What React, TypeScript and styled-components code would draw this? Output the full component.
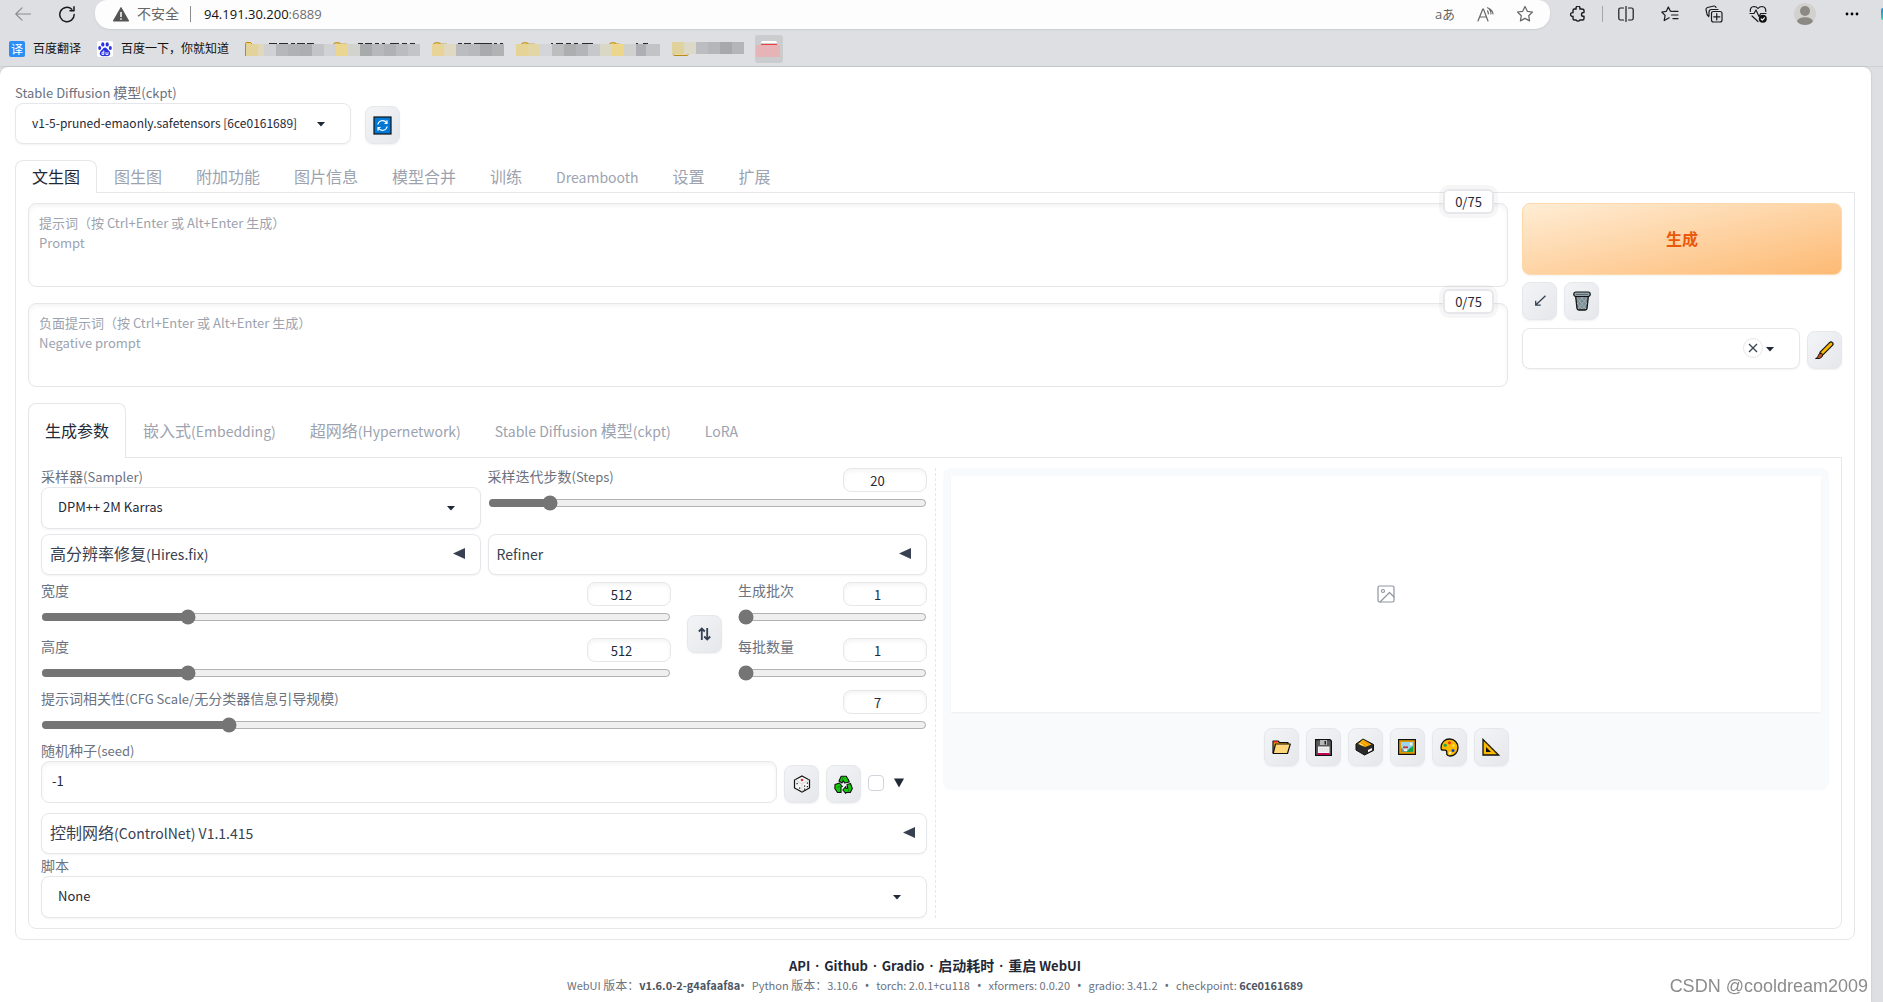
import React, { useState } from "react";
import styled, { createGlobalStyle, css } from "styled-components";

const BORDER = "#e5e7eb";
const UI_FONT = `"Noto Sans CJK SC", "Noto Sans", sans-serif`;
const CHROME_FONT = `"Open Sans", "Noto Sans CJK SC", sans-serif`;

const GlobalStyle = createGlobalStyle`
  *, *::before, *::after { box-sizing: border-box; }
  body { margin: 0; background: #dedfe3; font-family: ${UI_FONT}; font-size: 14px; line-height: 20px; color: #1f2937; }
  button, input, select, textarea { font: inherit; color: inherit; margin: 0; }
  button { cursor: pointer; padding: 0; }
  svg { display: block; flex: none; }
`;

const Window = styled.div`
  display: flex;
  flex-direction: column;
  min-height: 100vh;
`;

/* Latin runs are set one step smaller than the Chinese around them. */
const Latin = styled.span<{ $size: number }>`
  font-size: ${(p) => p.$size}px;
`;

const Mixed = ({ text, latin = 13 }: { text: string; latin?: number }) => (
  <span>
    {text.split(/([\x20-\x7e]+)/).filter(Boolean).map((part, i) =>
      /^[\x20-\x7e]/.test(part) ? <Latin key={i} $size={latin}>{part}</Latin> : part
    )}
  </span>
);

/* ---------- browser bars ---------- */

const AddressRow = styled.div`
  display: flex;
  height: 29px;
  font-family: ${CHROME_FONT};
`;

const NavButtons = styled.div`
  display: flex;
  align-items: center;
  gap: 28px;
  padding: 0 20px 1px 15px;
`;

const IconButton = styled.button<{ $w?: number; $color?: string }>`
  display: flex;
  align-items: center;
  justify-content: center;
  width: ${(p) => p.$w ?? 16}px;
  height: 24px;
  border: 0;
  background: none;
  color: ${(p) => p.$color ?? "#1b1b1b"};
  font-size: 13px;
`;

const AddressPill = styled.div`
  display: flex;
  flex: 1;
  align-items: center;
  min-width: 0;
  padding: 0 5px 1px 18px;
  background: #fdfdfd;
  border-radius: 12px 12px 15px 15px;
  box-shadow: 0 1px 2px rgba(0, 0, 0, 0.08);
`;

const Unsafe = styled.span`
  margin-left: 8px;
  color: #666;
`;

const PillDivider = styled.span`
  width: 1px;
  height: 16px;
  margin: 0 13px 0 11px;
  background: #8a8a8a;
`;

const Address = styled.span`
  flex: 1;
  color: #6f6f6f;
  font-size: 13px;
  b { font-weight: 400; color: #111; }
`;

const Toolbar = styled.div`
  display: flex;
  align-items: center;
  padding: 0 0 1px 5px;
`;

const ToolDivider = styled.span`
  width: 1px;
  height: 16px;
  margin: 0 1px 0 2px;
  background: #a5a6aa;
`;

const Avatar = styled.span`
  width: 22px;
  height: 22px;
  border-radius: 50%;
  overflow: hidden;
`;

const Sliver = styled.span`
  width: 2px;
  height: 12px;
  margin-left: 7px;
  border-radius: 2px 0 0 2px;
  background: linear-gradient(#1b8fd6, #35d0b0);
`;

const Bookmarks = styled.nav`
  display: flex;
  align-items: center;
  height: 38px;
  padding: 2px 0 0 9px;
  border-bottom: 1px solid #d0d1d5;
  font-family: ${CHROME_FONT};
  font-size: 12px;
`;

const Bookmark = styled.a`
  display: flex;
  align-items: center;
  gap: 8px;
  margin-right: 16px;
  color: #111;
  text-decoration: none;
`;

const FolderStrip = styled.div`
  display: flex;
  align-items: center;
`;

/* ---------- page ---------- */

const Page = styled.main`
  flex: 1;
  margin-right: 12px;
  padding: 17px 16px 0 15px;
  background: #fff;
  border-radius: 8px 8px 0 0;
  box-shadow: 0 0 2px rgba(0, 0, 0, 0.2);
`;

const FieldLabel = styled.label`
  display: block;
  height: 19px;
  line-height: 17px;
  color: #6b7280;
`;

const boxed = css`
  border: 1px solid ${BORDER};
  border-radius: 8px;
  background: #fff;
`;

const SelectWrap = styled.div`
  position: relative;
`;

const Select = styled.select<{ $compact?: boolean }>`
  ${boxed}
  display: block;
  width: 100%;
  height: ${(p) => (p.$compact ? 41 : 42)}px;
  padding: 0 38px 2px 16px;
  appearance: none;
  box-shadow: 0 1px 2px rgba(0, 0, 0, 0.05);
  font-size: ${(p) => (p.$compact ? 12 : 13)}px;
`;

const Caret = styled.svg`
  position: absolute;
  right: 26px;
  top: 19px;
  pointer-events: none;
`;

const ClearButton = styled.button`
  position: absolute;
  right: 37px;
  top: 10px;
  display: flex;
  align-items: center;
  justify-content: center;
  width: 20px;
  height: 20px;
  border: 1px solid ${BORDER};
  border-radius: 50%;
  background: #fff;
`;

const ToolButton = styled.button`
  display: flex;
  flex: none;
  align-items: center;
  justify-content: center;
  width: 35px;
  height: 38px;
  border: 1px solid ${BORDER};
  border-radius: 8px;
  background: linear-gradient(to bottom right, #f3f4f6, #e5e7eb);
  box-shadow: 0 1px 2px rgba(0, 0, 0, 0.06);
`;

const Quick = styled.div`
  display: flex;
  align-items: flex-end;
  gap: 14px;
  margin-bottom: 16px;
`;

const QuickField = styled.div`
  width: 336px;
`;

const TabList = styled.div`
  display: flex;
`;

const Tab = styled.button<{ $active?: boolean; $tall?: boolean }>`
  position: relative;
  height: ${(p) => (p.$tall ? 55 : 33)}px;
  margin-bottom: -1px;
  padding: 0 16px 2px;
  border: 1px solid ${(p) => (p.$active ? BORDER : "transparent")};
  border-bottom: 0;
  border-radius: 8px 8px 0 0;
  background: ${(p) => (p.$active ? "#fff" : "transparent")};
  color: ${(p) => (p.$active ? "#1f2937" : "#9ca3af")};
  font-size: 16px;
`;

const Panel = styled.section`
  padding: 10px 12px;
  border: 1px solid ${BORDER};
  border-radius: 0 0 8px 8px;
`;

const TopRow = styled.div`
  display: grid;
  grid-template-columns: minmax(0, 1fr) 320px;
  gap: 14px;
  margin-bottom: 16px;
`;

const Prompts = styled.div`
  display: grid;
  gap: 16px;
`;

const PromptWrap = styled.div`
  position: relative;
`;

const PromptBox = styled.textarea`
  ${boxed}
  display: block;
  width: 100%;
  height: 84px;
  padding: 9px 10px;
  resize: none;
  box-shadow: inset 0 2px 4px rgba(0, 0, 0, 0.05);
  font-size: 13px;
  &::placeholder { color: #9ca3af; opacity: 1; }
`;

const Counter = styled.span`
  position: absolute;
  top: -14px;
  right: 14px;
  width: 51px;
  height: 25px;
  border: 2px solid ${BORDER};
  border-radius: 6px;
  background: #fff;
  box-shadow: 0 0 0 4px rgba(0, 0, 0, 0.035);
  font-size: 13px;
  line-height: 21px;
  text-align: center;
`;

const Actions = styled.div`
  display: flex;
  flex-direction: column;
`;

const Generate = styled.button`
  height: 72px;
  margin-bottom: 7px;
  padding-bottom: 2px;
  border: 1px solid #fed7aa;
  border-radius: 8px;
  background: linear-gradient(to bottom right, #ffedd5, #fdba74);
  box-shadow: 0 1px 2px rgba(0, 0, 0, 0.05);
  color: #ea580c;
  font-size: 16px;
  font-weight: 600;
`;

const ButtonRow = styled.div`
  display: flex;
  gap: 7px;
  margin-bottom: 8px;
`;

const StyleRow = styled.div`
  display: flex;
  align-items: flex-end;
  gap: 7px;
`;

const Grow = styled.div`
  flex: 1;
  min-width: 0;
`;

const Split = styled.div`
  display: grid;
  grid-template-columns: repeat(2, minmax(0, 1fr));
`;

const Params = styled.div`
  padding-right: 8px;
`;

const Output = styled.div`
  padding-left: 7px;
  border-left: 1px dashed ${BORDER};
`;

const TwoCols = styled.div`
  display: grid;
  grid-template-columns: repeat(2, minmax(0, 1fr));
  gap: 5px 7px;
  margin-bottom: 7px;
`;

const SizeRow = styled.div`
  display: grid;
  grid-template-columns: minmax(0, 10fr) 35px minmax(0, 3fr);
  align-items: center;
  gap: 16px;
  margin-bottom: 9px;
  > ${ToolButton} { margin-top: 5px; }
`;

const Stack = styled.div`
  display: grid;
  gap: 13px;
`;

const SliderHead = styled.div`
  display: flex;
  align-items: flex-start;
  justify-content: space-between;
  margin-bottom: 3px;
`;

const NumberBox = styled.input`
  ${boxed}
  width: 84px;
  height: 24px;
  padding: 0 8px;
  text-align: center;
  box-shadow: inset 0 2px 4px rgba(0, 0, 0, 0.05);
  font-size: 13px;
`;

const Range = styled.input`
  display: block;
  width: 100%;
  height: 16px;
  accent-color: #757575;
`;

const Accordion = styled.button<{ $wide?: boolean }>`
  ${boxed}
  display: flex;
  align-items: center;
  justify-content: space-between;
  width: 100%;
  height: 41px;
  padding: 0 ${(p) => (p.$wide ? 11 : 15)}px 2px 8px;
  box-shadow: 0 1px 2px rgba(0, 0, 0, 0.05);
  color: #374151;
  font-size: 16px;
`;

const SeedRow = styled.div`
  display: flex;
  align-items: flex-end;
  gap: 7px;
  margin: 9px 0 10px;
`;

const SeedInput = styled.input`
  ${boxed}
  display: block;
  width: 100%;
  height: 42px;
  padding: 0 10px 4px;
  box-shadow: inset 0 2px 4px rgba(0, 0, 0, 0.05);
  font-size: 13px;
`;

const ExtraToggle = styled.label`
  display: flex;
  align-items: center;
  gap: 10px;
  width: 59px;
  height: 40px;
`;

const Check = styled.input`
  width: 16px;
  height: 16px;
  appearance: none;
  border: 1px solid #d1d5db;
  border-radius: 4px;
  background: #fff;
`;

const ScriptField = styled.div`
  margin-top: 3px;
`;

const Gallery = styled.div`
  padding: 8px 8px 24px;
  border-radius: 8px;
  background: #f9fafb;
`;

const Canvas = styled.div`
  display: flex;
  align-items: center;
  justify-content: center;
  height: 236px;
  margin-bottom: 16px;
  background: #fff;
  box-shadow: 0 1px 2px rgba(0, 0, 0, 0.05);
  color: #9095a0;
`;

const GalleryTools = styled.div`
  display: flex;
  justify-content: center;
  gap: 7px;
`;

const Footer = styled.footer`
  padding-top: 15px;
  text-align: center;
`;

const Links = styled.div`
  font-weight: 600;
  a { color: inherit; text-decoration: none; }
`;

const Dot = styled.span<{ $gap: string }>`
  margin: ${(p) => p.$gap};
  font-family: "Noto Sans", sans-serif;
  line-height: 1;
`;

const Versions = styled.div`
  color: #6b7280;
  font-size: 12px;
  line-height: 18px;
  b { font-weight: 600; color: #4b5563; }
`;

const Watermark = styled.div`
  position: fixed;
  right: 15px;
  bottom: 3px;
  color: #8c8c8c;
  font-family: "Liberation Sans", Arial, sans-serif;
  font-size: 18px;
  line-height: 26px;
  text-shadow: 1px 1px 0 #fff;
`;

/* ---------- icons ---------- */

const line = { fill: "none", stroke: "currentColor", strokeWidth: 1.2, strokeLinecap: "round" as const, strokeLinejoin: "round" as const };

const CaretIcon = () => (
  <Caret width="8" height="5" viewBox="0 0 8 5"><path d="M0 0h8L4 4.6z" fill="#1f2937" /></Caret>
);
const LeftTriangle = () => (
  <svg width="12" height="12" viewBox="0 0 12 12"><path d="M0 5.5 12 0v11z" fill="#374151" /></svg>
);
const Star = ({ lines = false }: { lines?: boolean }) => (
  <svg width="18" height="18" viewBox="0 0 18 18" {...line}>
    {lines ? (
      <path d="M11 6.400 9.300 6.100 7.300 2 5.300 6.300.8 7l3.300 3.400-.9 5.200 5-2.800M12 6.300h5M10.500 10H17M12 13.700h5" />
    ) : (
      <path d="m9 1.500 2.300 4.800 5.200.7-3.800 3.700.9 5.200L9 13.400l-4.600 2.500.9-5.200L1.500 7l5.200-.7z" />
    )}
  </svg>
);

const emoji = {
  refresh: (
    <svg width="19" height="19" viewBox="0 0 19 19">
      <rect x="1" y="1" width="17" height="17" fill="#0078d7" stroke="#111" strokeWidth="1.2" />
      <path d="M4.800 8.500a4.800 4.800 0 0 1 8.700-1.700M14.200 10.500a4.800 4.800 0 0 1-8.700 1.700M14 4.300v3.200h-2.500M5 14.700v-3.200h2.500" fill="none" stroke="#fff" strokeWidth="1.200" />
    </svg>
  ),
  arrow: (
    <svg width="12" height="12" viewBox="0 0 12 12" fill="none" stroke="#374151" strokeWidth="1.3"><path d="M11.500.8 2 9.800M1.700 5.800v4.400h5" /></svg>
  ),
  bin: (
    <svg width="18" height="20" viewBox="0 0 18 20">
      <path d="M2.500 4 4 17.500q.2 1.500 1.800 1.500h6.400q1.600 0 1.800-1.500L15.500 4z" fill="#7d8d94" stroke="#111" strokeWidth="1.3" />
      <path d="m4 7 9 11M4 12l5 6M7 5l7 8M14 7 5 18M14 12l-5 6M11 5l-7 8" stroke="#a9b8be" strokeWidth=".7" />
      <rect x=".8" y="1" width="16.400" height="4.500" rx="2" fill="#93a5ab" stroke="#111" strokeWidth="1.2" />
      <path d="M3 3.500h12" stroke="#5c6a70" />
    </svg>
  ),
  brush: (
    <svg width="19" height="19" viewBox="0 0 19 19" strokeLinecap="round">
      <path d="M7 12 16 3" stroke="#111" strokeWidth="5.2" /><path d="M7 12 16 3" stroke="#fdb900" strokeWidth="2.8" />
      <path d="M1 17.500q2-.6 2.300-3 .6-2.600 3.200-2.400 2 1.200.6 3.700Q5 18.500 1 17.500z" fill="#c8501e" stroke="#111" />
    </svg>
  ),
  die: (
    <svg width="18" height="18" viewBox="0 0 18 18">
      <path d="m9 1 7.500 4v8L9 17l-7.500-4V5z" fill="#f6f6f6" stroke="#111" strokeWidth="1.2" />
      <path d="m2 5 7 4 7-4M9 9v7.500" fill="none" stroke="#d4d4d4" />
      <circle cx="9" cy="5" r="1.300" fill="#d13438" />
      <path d="M3.500 8h1.300v1.300H3.500zM6 12.500h1.300v1.300H6zM11 10.500h1.200v1.200H11zM13.800 7.500H15v1.200h-1.200zM11 13.500h1.200v1.200H11zM13.800 11H15v1.200h-1.200z" fill="#222" />
    </svg>
  ),
  recycle: (
    <svg width="19" height="19" viewBox="0 0 19 19" fill="#16c60c" stroke="#111" strokeWidth="1.100" strokeLinejoin="round">
      <path d="M5 6 7.200 1.200h5L14.500 5l.8 2-4.800 1-1.200-2.500L8 8z" />
      <path d="M1 9.500 5.500 8l2.800 3.500-1.300.5v5.500H3.500L.8 13.500z" />
      <path d="m13 9.500 3.500-1 1.800 5-2 4h-4.500v1L8.800 15l3-3.500v1.800h2z" />
      <path d="m9.700 1.500-2 4M3 12.500l3-1M15 13.500l-1 3.500" stroke="#0b7d06" strokeWidth=".8" />
    </svg>
  ),
  folder: (
    <svg width="19" height="16" viewBox="0 0 19 16" strokeLinejoin="round">
      <path d="M1 14V2h5l1.500 1.500H16V6" fill="#f7a800" stroke="#111" strokeWidth="1.2" />
      <path d="M1.500 2h4v1.500h-4z" fill="#e81224" />
      <path d="M3.500 5h14.800L15.500 14.500H1.200z" fill="#ffd679" stroke="#111" strokeWidth="1.2" />
    </svg>
  ),
  floppy: (
    <svg width="17" height="17" viewBox="0 0 17 17">
      <path d="M.6.6H15L16.400 2v14.400H.6z" fill="#5a5a5a" stroke="#111" strokeWidth="1.2" />
      <path d="M5 1h7v5H5z" fill="#b8b8b8" /><path d="M9.500 2H11v3.500H9.500z" fill="#222" />
      <path d="M3 7.500h11.500v7H3z" fill="#f3f3f3" /><path d="M3 14h11.500v2H3z" fill="#c30052" /><path d="M4 10h9.500M4 12h9.500" stroke="#ccc" strokeWidth=".6" />
    </svg>
  ),
  cardbox: (
    <svg width="20" height="18" viewBox="0 0 20 18" strokeLinejoin="round">
      <path d="m1 6 7-5 10.500 5.500v6L9.500 17 1 12z" fill="#2b2b2b" stroke="#111" />
      <path d="M3 6 8 1.500 16.500 6.500 10 9z" fill="#fdb900" /><path d="m6 5 5 2.500M8 3l6 3.500" stroke="#f7630c" strokeWidth=".7" /><path d="M4.500 5.500 8 7.500" stroke="#fff0b0" />
      <path d="m13 12 4-2v2.300l-4 2z" fill="#fff" />
    </svg>
  ),
  picture: (
    <svg width="18" height="16" viewBox="0 0 18 16">
      <rect x=".6" y=".6" width="16.800" height="14.800" fill="#e09b00" stroke="#111" strokeWidth="1.2" />
      <path d="M3 3h12v10H3z" fill="#9bd3f2" /><circle cx="13" cy="5" r="1.300" fill="#fff8c0" />
      <path d="m8 13 4-4 3-2v6z" fill="#16a34a" /><path d="M3 9l3 1 2 3H3z" fill="#7a8b95" />
      <path d="M5 7.500 6 6.500l1.500 1L9 6.500l.8 1V11q-2.200 2-4.800 0z" fill="#c0c0c0" /><path d="M5 7.500h5V9H5z" fill="#c8302e" /><path d="M6 10.500h3V12H6z" fill="#fff" />
    </svg>
  ),
  palette: (
    <svg width="19" height="19" viewBox="0 0 19 19">
      <path d="M9.500 1C14.500 1 18 4.800 18 9.500S14.500 18 10.500 18q-4 .2-3.800-3 .4-2.800-1.700-2.800H2.300Q.9 11.500 1 9.200C1.500 4.200 5 1 9.500 1z" fill="#fdb900" stroke="#111" strokeWidth="1.3" />
      <circle cx="9.500" cy="4.800" r="1.600" fill="#f03a17" /><circle cx="5.200" cy="7.200" r="1.500" fill="#16a34a" /><circle cx="13" cy="12.500" r="1.500" fill="#0044d6" />
      <circle cx="13.500" cy="7.500" r="1.300" fill="#ffe04a" /><circle cx="10" cy="15" r="1.300" fill="#fff3c4" />
    </svg>
  ),
  triangle: (
    <svg width="18" height="18" viewBox="0 0 18 18"><path d="M1 1.500 16.500 17H1z" fill="#fdb900" stroke="#111" strokeWidth="1.3" /><path d="M4 9v5h5z" fill="#111" /><path d="m3 3.500 12 12" stroke="#b57f00" strokeWidth=".8" strokeDasharray="1 1" /></svg>
  ),
  swap: (
    <svg width="13" height="14" viewBox="0 0 13 14" fill="none" stroke="#374151" strokeWidth="1.8"><path d="M3.800 13V1.500M.8 4.500l3-3 3 3M9.200 1v11.500M6.200 9.500l3 3 3-3" /></svg>
  ),
};

/* Bookmark labels are hidden by a mosaic; each cell is [x, width, colour]. */
type Cell = [number, number, string];
const folders: { id: string; width: number; cells: Cell[]; tips: [number, number][]; top?: number; gold: string }[] = [
  { id: "1", width: 87, gold: "M.5 14V1.500q0-1 1-1h4l2 2h8V4M.5 14h5", tips: [[24, 8], [34, 9], [46, 4], [52, 8], [62, 7]],
    cells: [[1, 12, "#e3d39b"], [13, 6, "#e0d8bb"], [19, 12, "#d0d1d4"], [31, 12, "#b6b7ba"], [43, 12, "#b0b1b4"], [55, 12, "#adaeb1"], [67, 12, "#c3c4c7"], [79, 8, "#d1d2d4"]] },
  { id: "2", width: 100, gold: "M1 2.500Q2 .5 4 .8h3l2 1.400h6", tips: [[26, 5], [33, 7], [43, 4], [50, 3], [58, 9], [70, 5], [78, 5]],
    cells: [[0, 4, "#d0d1d3"], [4, 12, "#ead690"], [16, 12, "#d2d2ce"], [28, 12, "#a9aaac"], [40, 12, "#b7b8bb"], [52, 12, "#b0b1b4"], [64, 12, "#bbbcbf"], [76, 12, "#c3c4c8"]] },
  { id: "3", width: 84, gold: "M1 2.500Q2 .5 4 .8h3l2 1.400h6", tips: [[26, 4], [32, 7], [42, 18], [62, 3], [68, 3]],
    cells: [[0, 12, "#e7d496"], [12, 12, "#dfd9c1"], [24, 12, "#bbbcc0"], [36, 12, "#b8b9bb"], [48, 12, "#a9aaad"], [60, 12, "#b1b2b4"]] },
  { id: "4", width: 86, gold: "M5 2.500Q6 .5 8 .8h3l2 1.400h6", tips: [[35, 2], [40, 7], [50, 5], [58, 4], [66, 11]],
    cells: [[0, 12, "#e5d496"], [12, 12, "#e2d6a5"], [24, 12, "#d4d5d8"], [36, 12, "#bcbdbf"], [48, 12, "#adaeb0"], [60, 12, "#b4b5b9"], [72, 12, "#c7c8cc"], [84, 2, "#dbd7c5"]] },
  { id: "5", width: 70, gold: "M7 2.500Q8 .5 10 .8h3l2 1.400h3", tips: [[34, 2], [41, 5]],
    cells: [[0, 10, "#dbd7c5"], [10, 12, "#ecd68c"], [22, 12, "#d0d1cf"], [34, 10, "#aeafb5"], [44, 14, "#c2c3c7"]] },
  { id: "6", width: 83, top: 0, gold: "M1 12.500q.4 1 2 1h12l1.500-1", tips: [],
    cells: [[0, 12, "#e0d29b"], [12, 12, "#dcd9c9"], [24, 12, "#bcbdc1"], [36, 12, "#b5b6b8"], [48, 12, "#a7a8aa"], [60, 12, "#b4b5b7"]] },
];

const FolderIcon = ({ f }: { f: (typeof folders)[number] }) => (
  <svg width={f.width} height="14" viewBox={`0 0 ${f.width} 14`}>
    <path d={f.gold} fill="#f0cf6b" stroke="#b98a17" />
    {f.tips.map(([x, w]) => <rect key={x} x={x} y="1" width={w} height="1" fill="#2a2a2a" />)}
    {f.cells.map(([x, w, c]) => <rect key={x} x={x} y={f.top ?? 2} width={w} height="12" fill={c} />)}
  </svg>
);

/* ---------- widgets ---------- */

const Dropdown = ({ id, value, clear, compact }: { id: string; value: string; clear?: boolean; compact?: boolean }) => (
  <SelectWrap>
    <Select id={id} aria-label={id} $compact={compact}><option>{value}</option></Select>
    {clear && (
      <ClearButton aria-label="clear">
        <svg width="10" height="10" viewBox="0 0 10 10" stroke="#374151" strokeWidth="1.3"><path d="m1 1 8 8M9 1 1 9" /></svg>
      </ClearButton>
    )}
    <CaretIcon />
  </SelectWrap>
);

const Slider = ({ id, label, value, min, max }: { id: string; label: string; value: number; min: number; max: number }) => {
  const [current, setCurrent] = useState(value);
  const update = (e: React.ChangeEvent<HTMLInputElement>) => setCurrent(Number(e.target.value));
  return (
    <div>
      <SliderHead>
        <FieldLabel htmlFor={id}><Mixed text={label} /></FieldLabel>
        <NumberBox id={id} type="number" value={current} onChange={update} />
      </SliderHead>
      <Range type="range" aria-label={label} min={min} max={max} value={current} onChange={update} />
    </div>
  );
};

const mainTabs = ["文生图", "图生图", "附加功能", "图片信息", "模型合并", "训练", "Dreambooth", "设置", "扩展"];
const subTabs = ["生成参数", "嵌入式(Embedding)", "超网络(Hypernetwork)", "Stable Diffusion 模型(ckpt)", "LoRA"];
const links = ["API", "Github", "Gradio", "启动耗时", "重启 WebUI"];
const versions: [string, string, boolean?][] = [
  ["WebUI 版本：", "v1.6.0-2-g4afaaf8a", true],
  ["Python 版本：", "3.10.6"],
  ["torch: ", "2.0.1+cu118"],
  ["xformers: ", "0.0.20"],
  ["gradio: ", "3.41.2"],
  ["checkpoint: ", "6ce0161689", true],
];

const BrowserBars = () => (
  <header>
    <AddressRow>
      <NavButtons>
        <IconButton aria-label="back" $color="#8b8c90"><svg width="16" height="14" viewBox="0 0 16 14" {...line}><path d="M15.500 7H1M7 .8.8 7 7 13.200" /></svg></IconButton>
        <IconButton aria-label="reload"><svg width="16" height="17" viewBox="0 0 16 17" {...line} strokeWidth={1.5}><path d="M15.200 8.500a7.200 7.200 0 1 1-2.400-5.300M15 .8v4h-4" /></svg></IconButton>
      </NavButtons>
      <AddressPill>
        <svg width="16" height="15" viewBox="0 0 16 15"><path d="M8 .5 15.700 14H.3z" fill="#555" stroke="#555" strokeLinejoin="round" /><path d="M8 5v5M8 11.200v1.500" stroke="#fff" strokeWidth="1.5" /></svg>
        <Unsafe>不安全</Unsafe>
        <PillDivider />
        <Address><b>94.191.30.200</b>:6889</Address>
        <IconButton $w={40} $color="#666" aria-label="translate">aあ</IconButton>
        <IconButton $w={40} $color="#666" aria-label="read aloud">
          <svg width="17" height="15" viewBox="0 0 17 15" {...line}><path d="M1 14 5.800 2h.6L11 14M2.700 10h6.700M10.500 4q1 1.200.8 2.800M12.300 2q2 2.200 1.600 5M10.500.8q5 2 5.500 6" /></svg>
        </IconButton>
        <IconButton $w={40} $color="#666" aria-label="favourite"><Star /></IconButton>
      </AddressPill>
      <Toolbar>
        <IconButton $w={45} aria-label="extensions">
          <svg width="16" height="17" viewBox="0 0 16 17" {...line} strokeWidth={1.4}><path d="M3 4.500q0-1.500 1.500-1.500h1.700a2 2 0 1 1 3.600 0h1.700Q14 3 14 4.500V6.500h-.6a1.900 1.900 0 1 0 0 3.800h.6v2.200q0 1.500-1.500 1.500H9.800a2 2 0 0 1-3.600 0H4.500Q3 14 3 12.500v-2.200a1.900 1.900 0 1 1 0-3.600z" /></svg>
        </IconButton>
        <ToolDivider />
        <IconButton $w={44} aria-label="split screen">
          <svg width="16" height="16" viewBox="0 0 16 16" {...line}><path d="M5.500 2H2.500Q.8 2 .8 3.800v8.400Q.8 14 2.500 14h3M10.500 2h3q1.700 0 1.700 1.800v8.400q0 1.800-1.700 1.800h-3M8 .5v15" /></svg>
        </IconButton>
        <IconButton $w={44} aria-label="favourites"><Star lines /></IconButton>
        <IconButton $w={44} aria-label="collections">
          <svg width="18" height="18" viewBox="0 0 18 18" {...line}><path d="M3.800 11.500 2.300 10Q1 5 1 4.200 1 3 2.500 2.500L9 1q1.500-.2 2 1.500M4 10.500V7q0-2.500 2.500-2.500H13M8.500 6.500H15q2 0 2 2V15q0 2-2 2H8.500q-2 0-2-2V8.500q0-2 2-2zM11.750 8.700v6.200M8.700 11.800h6.200" /></svg>
        </IconButton>
        <IconButton $w={44} aria-label="performance">
          <svg width="18" height="18" viewBox="0 0 18 18" {...line}><path d="M1.300 6.500Q1 1.800 5 1.500q2.500 0 4 2 1.500-2 4-2 4 .3 3.800 5M1 8.500h4l2-3.500 3 6.500 1.700-3H17M3 11l6 5.500" /><circle cx="13.800" cy="13.800" r="4" fill="#111" stroke="none" /><path d="m12.200 14 1.200 1.100 2-2.300" stroke="#fff" /></svg>
        </IconButton>
        <IconButton $w={50} aria-label="profile">
          <Avatar><svg width="22" height="22" viewBox="0 0 22 22"><path d="M0 0h22v22H0z" fill="#d3d1cd" /><circle cx="11" cy="8" r="5" fill="#8c8984" /><ellipse cx="11" cy="19" rx="8" ry="4.800" fill="#8c8984" /></svg></Avatar>
        </IconButton>
        <IconButton $w={44} aria-label="more"><svg width="14" height="4" viewBox="0 0 14 4"><circle cx="2" cy="2" r="1.400" /><circle cx="7" cy="2" r="1.400" /><circle cx="12" cy="2" r="1.400" /></svg></IconButton>
        <Sliver />
      </Toolbar>
    </AddressRow>
    <Bookmarks>
      <Bookmark href="#fanyi">
        <svg width="16" height="16" viewBox="0 0 16 16"><rect width="16" height="16" rx="2" fill="#2b8df5" /><text x="8" y="12.500" fontSize="12" fill="#fff" textAnchor="middle">译</text></svg>
        百度翻译
      </Bookmark>
      <Bookmark href="#baidu">
        <svg width="16" height="16" viewBox="0 0 16 16"><rect width="16" height="16" rx="2" fill="#fff" /><g fill="#2932e1"><ellipse cx="5.800" cy="3.400" rx="1.600" ry="2.200" /><ellipse cx="10.200" cy="3.400" rx="1.600" ry="2.200" /><ellipse cx="2.700" cy="7" rx="1.500" ry="2" /><ellipse cx="13.300" cy="7" rx="1.500" ry="2" /><path d="M8 6.500q1.500 0 2.500 1.700l2.300 2.500q1.200 2.300-.5 3.800-1.300 1-4.300.6-3 .4-4.300-.6-1.700-1.500-.5-3.800l2.300-2.500Q6.500 6.500 8 6.500z" /></g><path d="M6.800 9.500v4H5v-2.200h1.800M9 11v2.500h2V11" fill="none" stroke="#fff" strokeWidth=".9" /></svg>
        百度一下，你就知道
      </Bookmark>
      <FolderStrip>
        {folders.map((f) => <FolderIcon key={f.id} f={f} />)}
        <svg width="28" height="28" viewBox="0 0 28 28"><rect width="28" height="28" rx="3" fill="#cbccce" /><path d="M6 8q0-2 2-2h12q2 0 2 2z" fill="#fff" /><path d="M6 9h16v1H6z" fill="#f03c3c" /><path d="M1 10h24v12H1z" fill="#e6b4b7" /></svg>
      </FolderStrip>
    </Bookmarks>
  </header>
);

export default function App() {
  return (
    <Window>
      <GlobalStyle />
      <BrowserBars />
      <Page>
        <Quick>
          <QuickField>
            <FieldLabel htmlFor="checkpoint"><Mixed text="Stable Diffusion 模型(ckpt)" /></FieldLabel>
            <Dropdown id="checkpoint" compact value="v1-5-pruned-emaonly.safetensors [6ce0161689]" />
          </QuickField>
          <ToolButton aria-label="refresh">{emoji.refresh}</ToolButton>
        </Quick>

        <TabList role="tablist">
          {mainTabs.map((t, i) => <Tab key={t} role="tab" $active={i === 0}><Mixed text={t} latin={14} /></Tab>)}
        </TabList>
        <Panel>
          <TopRow>
            <Prompts>
              <PromptWrap>
                <PromptBox aria-label="Prompt" placeholder={"提示词（按 Ctrl+Enter 或 Alt+Enter 生成）\nPrompt"} />
                <Counter>0/75</Counter>
              </PromptWrap>
              <PromptWrap>
                <PromptBox aria-label="Negative prompt" placeholder={"负面提示词（按 Ctrl+Enter 或 Alt+Enter 生成）\nNegative prompt"} />
                <Counter>0/75</Counter>
              </PromptWrap>
            </Prompts>
            <Actions>
              <Generate>生成</Generate>
              <ButtonRow>
                <ToolButton aria-label="read parameters">{emoji.arrow}</ToolButton>
                <ToolButton aria-label="clear prompt">{emoji.bin}</ToolButton>
              </ButtonRow>
              <StyleRow>
                <Grow><Dropdown id="styles" compact value="" clear /></Grow>
                <ToolButton aria-label="edit styles">{emoji.brush}</ToolButton>
              </StyleRow>
            </Actions>
          </TopRow>

          <TabList role="tablist">
            {subTabs.map((t, i) => <Tab key={t} role="tab" $tall $active={i === 0}><Mixed text={t} latin={14} /></Tab>)}
          </TabList>
          <Panel>
            <Split>
              <Params>
                <TwoCols>
                  <div>
                    <FieldLabel htmlFor="sampler"><Mixed text="采样器(Sampler)" /></FieldLabel>
                    <Dropdown id="sampler" value="DPM++ 2M Karras" />
                  </div>
                  <Slider id="steps" label="采样迭代步数(Steps)" value={20} min={1} max={150} />
                  <Accordion><Mixed text="高分辨率修复(Hires.fix)" latin={14} /><LeftTriangle /></Accordion>
                  <Accordion><Mixed text="Refiner" latin={14} /><LeftTriangle /></Accordion>
                </TwoCols>
                <SizeRow>
                  <Stack>
                    <Slider id="width" label="宽度" value={512} min={64} max={2048} />
                    <Slider id="height" label="高度" value={512} min={64} max={2048} />
                  </Stack>
                  <ToolButton aria-label="swap width and height">{emoji.swap}</ToolButton>
                  <Stack>
                    <Slider id="batch-count" label="生成批次" value={1} min={1} max={100} />
                    <Slider id="batch-size" label="每批数量" value={1} min={1} max={8} />
                  </Stack>
                </SizeRow>
                <Slider id="cfg" label="提示词相关性(CFG Scale/无分类器信息引导规模)" value={7} min={1} max={30} />
                <SeedRow>
                  <Grow>
                    <FieldLabel htmlFor="seed"><Mixed text="随机种子(seed)" /></FieldLabel>
                    <SeedInput id="seed" type="number" defaultValue={-1} />
                  </Grow>
                  <ToolButton aria-label="random seed">{emoji.die}</ToolButton>
                  <ToolButton aria-label="reuse seed">{emoji.recycle}</ToolButton>
                  <ExtraToggle>
                    <Check type="checkbox" aria-label="extra seed options" />
                    <svg width="10" height="10" viewBox="0 0 10 10"><path d="M0 .5h10L5 9.500z" fill="#1f2937" /></svg>
                  </ExtraToggle>
                </SeedRow>
                <Accordion $wide><Mixed text="控制网络(ControlNet) V1.1.415" latin={14} /><LeftTriangle /></Accordion>
                <ScriptField>
                  <FieldLabel htmlFor="script">脚本</FieldLabel>
                  <Dropdown id="script" value="None" />
                </ScriptField>
              </Params>
              <Output>
                <Gallery>
                  <Canvas>
                    <svg width="18" height="18" viewBox="0 0 18 18" {...line}><rect x="1" y="1" width="16" height="16" rx="1.500" /><circle cx="6" cy="6" r="1.500" /><path d="m3 17 9.500-9.500L17 12" /></svg>
                  </Canvas>
                  <GalleryTools>
                    <ToolButton aria-label="open folder">{emoji.folder}</ToolButton>
                    <ToolButton aria-label="save">{emoji.floppy}</ToolButton>
                    <ToolButton aria-label="save zip">{emoji.cardbox}</ToolButton>
                    <ToolButton aria-label="send to img2img">{emoji.picture}</ToolButton>
                    <ToolButton aria-label="send to inpaint">{emoji.palette}</ToolButton>
                    <ToolButton aria-label="send to extras">{emoji.triangle}</ToolButton>
                  </GalleryTools>
                </Gallery>
              </Output>
            </Split>
          </Panel>
        </Panel>

        <Footer>
          <Links>
            {links.map((l, i) => (
              <React.Fragment key={l}>
                {i > 0 && <Dot $gap="0 5px">·</Dot>}
                <a href="#footer"><Mixed text={l} /></a>
              </React.Fragment>
            ))}
          </Links>
          <Versions>
            {versions.map(([name, value, strong], i) => (
              <React.Fragment key={name}>
                {i > 0 && <Dot $gap={i === 1 ? "0 7px 0 0" : "0 7px"}>•</Dot>}
                <Mixed text={name} latin={11} />
                {strong ? <b><Mixed text={value} latin={11} /></b> : <Mixed text={value} latin={11} />}
              </React.Fragment>
            ))}
          </Versions>
        </Footer>
      </Page>
      <Watermark>CSDN @cooldream2009</Watermark>
    </Window>
  );
}
